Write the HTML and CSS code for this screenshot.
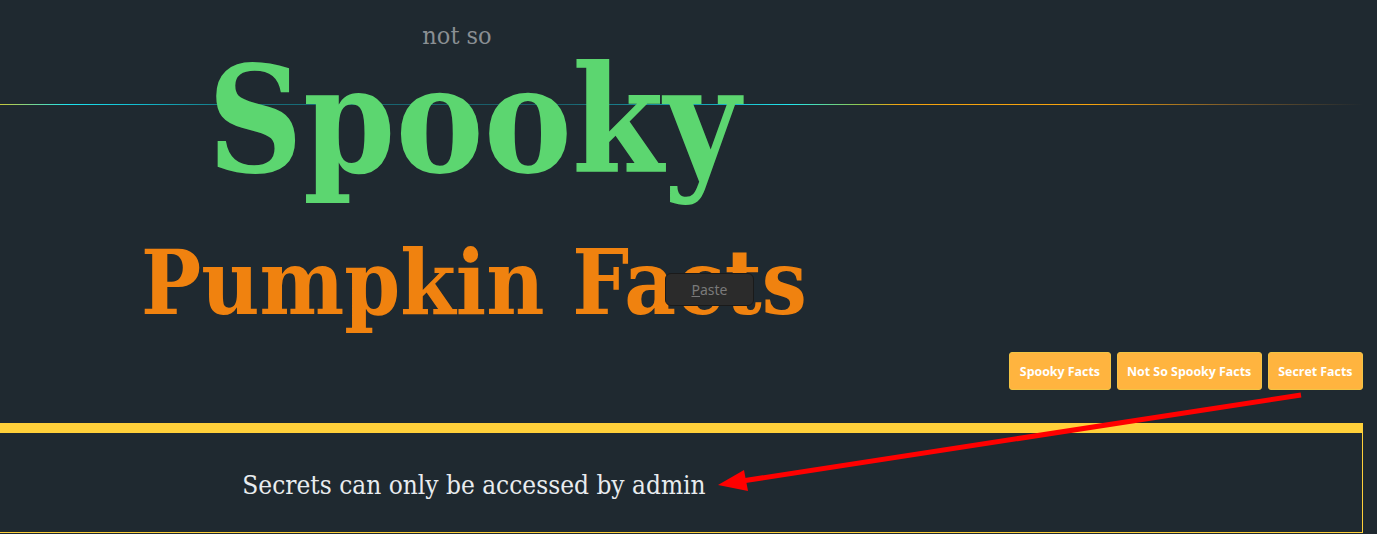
FILE: index.html
```html
<!DOCTYPE html>
<html lang="en">
<head>
<meta charset="utf-8">
<title>Spooky Pumpkin Facts</title>
<link rel="stylesheet" href="styles.css">
</head>
<body>
<div class="page">
  <header class="hero">
    <div class="col">
      <div class="notso">not so</div>
      <h1 class="spooky">Spooky</h1>
      <h2 class="pumpkin">Pumpkin Facts</h2>
    </div>
  </header>
  <nav class="nav">
    <button class="btn">Spooky Facts</button>
    <button class="btn">Not So Spooky Facts</button>
    <button class="btn">Secret Facts</button>
  </nav>
  <section class="panel">
    <div class="col">
      <p class="secret">Secrets can only be accessed by admin</p>
    </div>
  </section>
</div>
<div class="ctxmenu"><span class="ctxitem"><u>P</u>aste</span></div>
<svg class="arrow" width="1377" height="534" viewBox="0 0 1377 534" aria-hidden="true">
  <line x1="1301" y1="395" x2="742" y2="481" stroke="#ff0000" stroke-width="5"/>
  <polygon points="718,485 744,470 748,491" fill="#ff0000"/>
</svg>
</body>
</html>
```

FILE: styles.css
```css
html, body {
  margin: 0;
  padding: 0;
  background: #1f2930;
  width: 1377px;
  height: 534px;
  overflow: hidden;
}

.page {
  width: 1363px;
  position: relative;
}

.hero {
  padding-top: 20px;
  background-image: linear-gradient(90deg,
    #c8c83a 0%,
    #1de3f0 5%,
    #12bcd0 10%,
    #16707c 17%,
    #1a5a66 40%,
    #17a7b8 52%,
    #22e6ee 58%,
    #8fc850 63%,
    #f3a20e 66%,
    #f6a30d 80%,
    #7a5a2a 90%,
    rgba(31,41,48,0) 100%);
  background-size: 100% 1px;
  background-position: 0 104px;
  background-repeat: no-repeat;
}

.col {
  width: 948px;
  text-align: center;
}

.notso {
  padding-right: 34px;
  font-family: "DejaVu Serif Condensed", "DejaVu Serif", serif;
  font-weight: 300;
  font-size: 25px;
  line-height: 32px;
  color: #8a8f93;
}

.spooky {
  margin: 0;
  font-family: "DejaVu Serif Condensed", "DejaVu Serif", serif;
  font-weight: 700;
  font-size: 147px;
  line-height: 138px;
  color: #5cd670;
}

.pumpkin {
  margin: 28px 0 0;
  font-family: "DejaVu Serif Condensed", "DejaVu Serif", serif;
  font-weight: 700;
  font-size: 89px;
  line-height: 130px;
  color: #f0820f;
}

.nav {
  display: flex;
  justify-content: flex-end;
  gap: 6px;
  height: 38px;
  margin-top: 4px;
}

.btn {
  height: 38px;
  padding: 0 9.5px;
  background: #ffb43f;
  border: 1px solid #f2c444;
  border-radius: 3px;
  color: #ffffff;
  font-family: "Open Sans", sans-serif;
  font-weight: 700;
  font-size: 12.4px;
}

.panel {
  margin-top: 33px;
  border-top: 10px solid #ffd03a;
  border-right: 1px solid #ffd03a;
  border-bottom: 1px solid #ffd03a;
  box-sizing: border-box;
  height: 110px;
}

.secret {
  margin: 0;
  padding-top: 35px;
  font-family: "DejaVu Serif Condensed", "DejaVu Serif", serif;
  font-size: 26px;
  line-height: 34px;
  color: #e8ecef;
}

.ctxmenu {
  position: absolute;
  left: 665px;
  top: 273px;
  width: 87px;
  height: 31px;
  background: #2b2b2b;
  border: 1px solid #1a1a1a;
  border-radius: 6px;
  display: flex;
  align-items: center;
  justify-content: center;
}

.ctxitem {
  font-family: "Noto Sans", sans-serif;
  font-size: 14px;
  color: #7a7a7a;
}

.arrow {
  position: absolute;
  left: 0;
  top: 0;
  pointer-events: none;
}
```
